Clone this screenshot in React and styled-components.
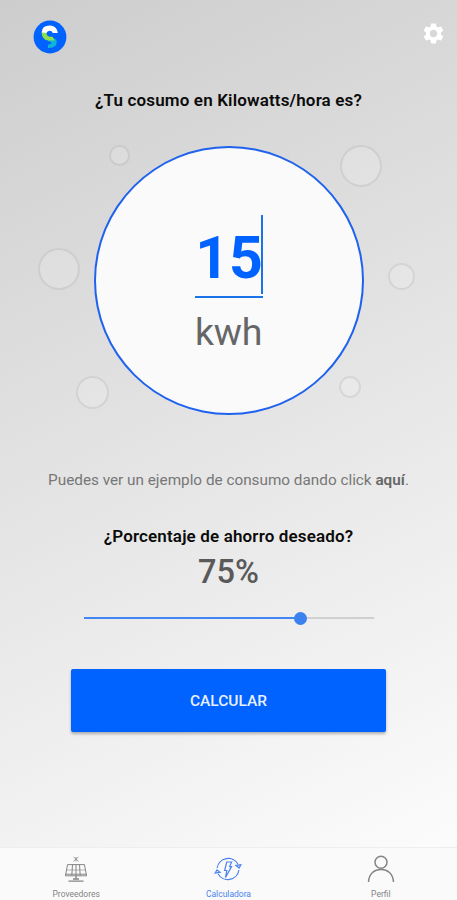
import React, { useState } from 'react'
import styled, { createGlobalStyle } from 'styled-components'
import { MdSettings } from 'react-icons/md'

const bubbles = [
    { x: 119, y: 155.5, size: 21 },
    { x: 360.5, y: 166, size: 42 },
    { x: 59, y: 268.5, size: 42 },
    { x: 401, y: 276.5, size: 27 },
    { x: 92.5, y: 392, size: 33 },
    { x: 349.5, y: 387, size: 22 },
];

const LogoIcon = () => (
    <svg width="34" height="34" viewBox="0 0 34 34">
        <circle cx="17" cy="17" r="16.4" fill="#0062ff" />
        <path d="M15.4 17.4 H17.8 Q23.8 18 23.8 22.2 Q23.5 28 15 28 V24.6 Q18.4 24.6 18.4 22.8 Q18.2 21.4 15 21.2Z" fill="#0fb5d6" />
        <path d="M8.6 12.2 H13.4 Q13.4 16.4 17 16.7 H19.6 L21.5 20.6 H15.5 Q9 20 8.6 12.2Z" fill="#8ee04b" />
        <path d="M8.6 12.4 Q8.9 5.8 16.5 5.6 Q24 5.9 24.8 13.1 H19.8 Q19 10.7 16.6 10.7 Q14.2 10.9 13.4 13Z" fill="#fff" />
    </svg>
)

const SolarIcon = () => (
    <svg width="24" height="28" viewBox="0 0 24 28" fill="none" stroke="currentColor" strokeWidth="1">
        <path d="M9.5 2 L14.5 6.4 M14.5 2 L9.5 6.4 M12 2 V6.4" strokeWidth="0.8" />
        <path d="M3.6 9.6 H20.4 L22.6 20.8 H1.4Z" />
        <path d="M1.4 19.2 H22.6 M8.5 9.5 L7.8 20.5 M15.5 9.5 L16.2 20.5 M12 9.5 V20.5" />
        <path d="M2.5 15 H21.5" strokeWidth="0.6" />
        <path d="M12 20.5 V24.5 M9 24 H15 M4.5 26.2 H19.5" strokeWidth="1.3" />
    </svg>
)

const EnergyIcon = () => (
    <svg width="28" height="28" viewBox="0 0 28 28" fill="none" stroke="currentColor" strokeWidth="1.2">
        <path d="M3.1 13 A11.2 11.2 0 0 1 24 9.2 M24.9 15 A11.2 11.2 0 0 1 4 18.8" />
        <path d="M22 10.5 L25.2 13 L26.8 9.8Z M1.2 18 L3 15 L6 17.3Z" />
        <path d="M12.8 7 H17.6 L15.6 11.6 H17.6 L11.5 22.5 L12.8 15.5 H10.6Z" />
    </svg>
)

const ProfileIcon = () => (
    <svg width="28" height="28" viewBox="0 0 28 28" fill="none" stroke="currentColor" strokeWidth="1.5">
        <circle cx="14" cy="7.3" r="6" />
        <path d="M1.5 27 C2 18.5 7.5 14.4 14 14.4 S26 18.5 26.5 27" />
    </svg>
)

const tabs = [
    { name: "Proveedores", Icon: SolarIcon },
    { name: "Calculadora", Icon: EnergyIcon },
    { name: "Perfil", Icon: ProfileIcon },
];

function App() {
    const [active, setActive] = useState("Calculadora");
    const [percent] = useState(75);

    return (
        <Screen>
            <GlobalStyle />
            <Header>
                <LogoIcon />
                <MdSettings size={25} color="#fff" />
            </Header>
            <Content>
                <Question>¿Tu cosumo en Kilowatts/hora es?</Question>
                <Stage>
                    {bubbles.map((b) => (
                        <Bubble key={b.x} $x={b.x} $y={b.y - 146} $size={b.size} />
                    ))}
                    <Dial>
                        <Amount>15<Caret /></Amount>
                        <Unit>kwh</Unit>
                    </Dial>
                </Stage>
                <Hint>Puedes ver un ejemplo de consumo dando click <b>aquí</b>.</Hint>
                <Question $top="34px">¿Porcentaje de ahorro deseado?</Question>
                <Percent>{percent}%</Percent>
                <Track>
                    <Fill style={{ width: `${percent}%` }} />
                    <Thumb />
                    <Rest />
                </Track>
                <Button>CALCULAR</Button>
            </Content>
            <TabBar>
                {tabs.map(({ name, Icon }) => (
                    <Tab key={name} $active={active === name} onClick={() => setActive(name)}>
                        <Icon />
                        <span>{name}</span>
                    </Tab>
                ))}
            </TabBar>
        </Screen>
    )
}

const GlobalStyle = createGlobalStyle`
    * {
        box-sizing: border-box;
    }
    body {
        margin: 0;
        font-family: Roboto, sans-serif;
    }
`

const Screen = styled.div`
    display: flex;
    flex-direction: column;
    width: 457px;
    height: 900px;
    overflow: hidden;
    background: linear-gradient(154deg, #cdcdcd 0%, #fdfdfd 98%);
`

const Header = styled.header`
    display: flex;
    align-items: flex-start;
    justify-content: space-between;
    height: 88px;
    padding: 20px 11px 0 33px;

    svg:last-child {
        margin-top: 1px;
    }
`

const Content = styled.main`
    display: flex;
    flex-direction: column;
    align-items: center;
    flex: 1;
`

const Question = styled.h2`
    margin: ${({ $top }) => $top || "0"} 0 0;
    font-size: 17px;
    font-weight: 600;
    letter-spacing: 0.15px;
    line-height: 24px;
    color: #0b0b0b;
    white-space: nowrap;
`

const Stage = styled.section`
    position: relative;
    display: flex;
    justify-content: center;
    width: 100%;
    margin-top: 34px;
`

const Bubble = styled.span`
    position: absolute;
    left: ${({ $x, $size }) => $x - $size / 2}px;
    top: ${({ $y, $size }) => $y - $size / 2}px;
    width: ${({ $size }) => $size}px;
    height: ${({ $size }) => $size}px;
    border: 2px solid rgba(0, 0, 0, 0.08);
    border-radius: 50%;
    background: rgba(255, 255, 255, 0.15);
`

const Dial = styled.div`
    display: flex;
    flex-direction: column;
    align-items: center;
    width: 270px;
    height: 269px;
    padding-top: 68px;
    border: 2px solid #1f62ee;
    border-radius: 50%;
    background: #fafafa;
`

const Amount = styled.div`
    position: relative;
    height: 82px;
    margin-left: 1px;
    border-bottom: 2px solid #1a73e8;
    font-size: 59px;
    font-weight: 700;
    line-height: 84px;
    color: #0062ff;
`

const Caret = styled.span`
    position: absolute;
    top: -1px;
    right: 0;
    width: 2px;
    height: 79px;
    background: #1a73e8;
`

const Unit = styled.div`
    margin-top: 12px;
    font-size: 37.5px;
    letter-spacing: -0.2px;
    line-height: 44px;
    color: #666;
`

const Hint = styled.p`
    margin: 55px 0 0;
    font-size: 15.3px;
    line-height: 20px;
    color: #777;
    white-space: nowrap;

    b {
        font-weight: 600;
        color: #666;
    }
`

const Percent = styled.div`
    margin-top: 1px;
    font-size: 32.5px;
    font-weight: 500;
    line-height: 46px;
    color: #595959;
`

const Track = styled.div`
    display: flex;
    align-items: center;
    width: 290px;
    height: 14px;
    margin-top: 16px;
`

const Fill = styled.div`
    height: 2px;
    background: #4285f4;
`

const Rest = styled.div`
    flex: 1;
    height: 2px;
    background: #d0d0d0;
`

const Thumb = styled.div`
    flex: none;
    width: 13px;
    height: 13px;
    margin: 0 -6px 0 -7px;
    border-radius: 50%;
    background: #3b82f0;
    z-index: 1;
`

const Button = styled.button`
    width: 315px;
    height: 63px;
    margin-top: 44px;
    padding: 1px 0 0;
    border: 0;
    border-radius: 2px;
    background: #0062ff;
    box-shadow: 0 2px 3px rgba(0, 0, 0, 0.28);
    font-family: inherit;
    font-size: 15.5px;
    font-weight: 500;
    color: #e9f0ff;
`

const TabBar = styled.nav`
    display: grid;
    grid-template-columns: repeat(3, 1fr);
    height: 53px;
    border-top: 1px solid #eee;
    background: #fafafa;
`

const Tab = styled.a`
    display: flex;
    flex-direction: column;
    align-items: center;
    padding-top: 7px;
    font-size: 8.5px;
    line-height: 10px;
    color: ${({ $active }) => ($active ? "#4a82ee" : "#858585")};
    cursor: pointer;

    span {
        margin-top: 6px;
    }
`

export default App
